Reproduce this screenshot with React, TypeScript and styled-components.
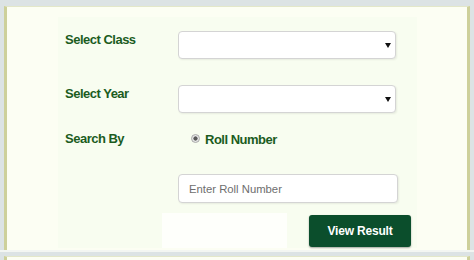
import React from "react";
import styled, { createGlobalStyle } from "styled-components";

const Global = createGlobalStyle`
  html, body {
    margin: 0;
    padding: 0;
    overflow: hidden;
    background: #dce3e4;
    font-family: "Liberation Sans", Arial, sans-serif;
  }
  * { box-sizing: border-box; }
`;

const Page = styled.div`
  padding: 6px 4px 0 4px;
  height: 260px;
  width: 474px;
`;

const Panel = styled.div`
  width: 466px;
  height: 244px;
  background: #fcfef3;
  border-top: 1px solid #e3e7c9;
  border-left: 3px solid #cdd09a;
  border-right: 3px solid #cdd09a;
  padding: 10px 0 0 51px;
`;

const Separator = styled.div`
  height: 2px;
  margin: 0 -4px;
  background: #f3f6f2;
`;

const NextPanel = styled.div`
  margin-top: 4px;
  width: 466px;
  height: 4px;
  background: #fcfef3;
  border-top: 1px solid #e3e7c9;
  border-left: 3px solid #cdd09a;
  border-right: 3px solid #cdd09a;
`;

const FormArea = styled.div`
  width: 359px;
  height: 231px;
  background: #f8fdf0;
  padding: 14px 0 0 7px;
`;

const Row = styled.div<{ $top: number }>`
  display: grid;
  grid-template-columns: 113px auto;
  align-items: start;
  margin-top: ${(p) => p.$top}px;
`;

const Label = styled.div<{ $pad?: number }>`
  font-size: 13px;
  line-height: 15px;
  font-weight: bold;
  letter-spacing: -0.5px;
  color: #1b5c1e;
  padding-top: ${(p) => p.$pad ?? 1}px;
`;

const SelectWrap = styled.div`
  position: relative;
  width: 218px;
  height: 28px;
  &::after {
    content: "";
    position: absolute;
    right: 5px;
    top: 12px;
    border-left: 3px solid transparent;
    border-right: 3px solid transparent;
    border-top: 5px solid #111;
    pointer-events: none;
  }
`;

const Select = styled.select`
  appearance: none;
  -webkit-appearance: none;
  width: 100%;
  height: 100%;
  background: #fff;
  border: 1px solid #d4d4d4;
  border-radius: 4px;
  box-shadow: 1px 1px 2px rgba(0, 0, 0, 0.07);
  font-family: inherit;
  font-size: 12px;
  outline: none;
`;

const Option = styled.div`
  display: flex;
  align-items: flex-start;
  gap: 5px;
  padding: 1px 0 0 13px;
  min-height: 16px;
`;

const Radio = styled.span`
  width: 9px;
  height: 9px;
  margin-top: 2px;
  border-radius: 50%;
  border: 1px solid #aaaaaa;
  background: radial-gradient(circle, #5a5a5a 0 1.8px, #e6e6e6 2.4px);
`;

const OptionText = styled.span`
  font-size: 13px;
  line-height: 15px;
  font-weight: bold;
  letter-spacing: -0.5px;
  color: #1b5c1e;
`;

const Input = styled.input`
  width: 220px;
  height: 29px;
  background: #fff;
  border: 1px solid #d4d4d4;
  border-radius: 4px;
  box-shadow: 1px 1px 2px rgba(0, 0, 0, 0.07);
  padding: 0 0 0 10px;
  font-family: inherit;
  font-size: 11.3px;
  color: #555;
  outline: none;
  &::placeholder {
    color: #6e6e6e;
  }
`;

const ActionRow = styled.div`
  display: flex;
  align-items: flex-start;
  margin-top: 10px;
`;

const BlankCell = styled.div`
  margin-left: 97px;
  width: 125px;
  height: 35px;
  background: #fefffb;
`;

const Button = styled.button`
  margin: 2px 0 0 22px;
  width: 102px;
  height: 32px;
  border: none;
  border-radius: 3px;
  background: #0b4e2c;
  color: #fff;
  font-family: inherit;
  font-size: 12px;
  font-weight: bold;
  letter-spacing: -0.2px;
  box-shadow: 0 1px 2px rgba(0, 0, 0, 0.35);
  cursor: pointer;
`;

export default function App() {
  return (
    <>
      <Global />
      <Page>
        <Panel>
          <FormArea>
            <Row $top={0}>
              <Label>Select Class</Label>
              <SelectWrap>
                <Select defaultValue="">
                  <option value=""></option>
                </Select>
              </SelectWrap>
            </Row>
            <Row $top={26}>
              <Label>Select Year</Label>
              <SelectWrap>
                <Select defaultValue="">
                  <option value=""></option>
                </Select>
              </SelectWrap>
            </Row>
            <Row $top={18}>
              <Label $pad={0}>Search By</Label>
              <Option>
                <Radio />
                <OptionText>Roll Number</OptionText>
              </Option>
            </Row>
            <Row $top={27}>
              <span />
              <Input placeholder="Enter Roll Number" />
            </Row>
            <ActionRow>
              <BlankCell />
              <Button>View Result</Button>
            </ActionRow>
          </FormArea>
        </Panel>
        <Separator />
        <NextPanel />
      </Page>
    </>
  );
}
